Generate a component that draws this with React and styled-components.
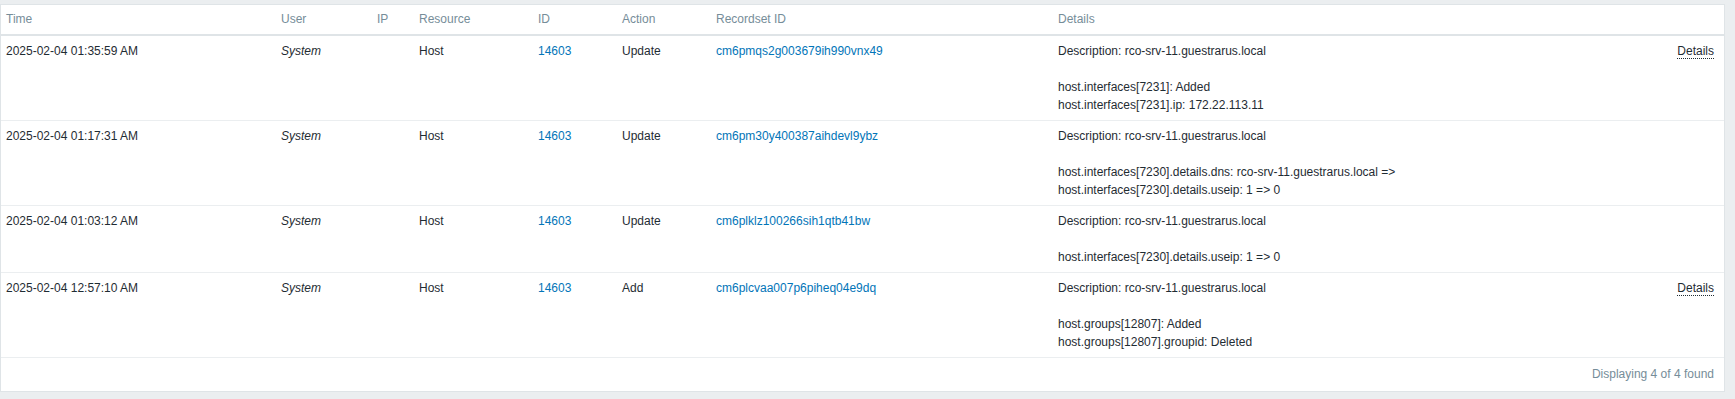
import React from "react";
import styled, { createGlobalStyle } from "styled-components";

const Global = createGlobalStyle`
  html, body { margin: 0; padding: 0; background: #ebeef0; }
  body { font-family: "Liberation Sans", Arial, sans-serif; font-size: 12px; color: #1f2c33; }
`;

const Page = styled.div`
  padding: 4px 10px 7px 0;
`;

const Panel = styled.div`
  background: #ffffff;
  border: 1px solid #dfe4e7;
`;

const Table = styled.table`
  width: 100%;
  border-collapse: collapse;
  table-layout: fixed;
`;

const Th = styled.th`
  text-align: left;
  font-weight: normal;
  color: #768d99;
  padding: 7px 5px 8px;
  line-height: 14px;
  border-bottom: 2px solid #dfe4e7;
  white-space: nowrap;
`;

const Row = styled.tr`
  border-bottom: 1px solid #ebeef0;
`;

const Td = styled.td`
  vertical-align: top;
  padding: 6px ${(p) => (p.$last ? "10px" : "5px")} 6px 5px;
  line-height: 18px;
  font-style: ${(p) => (p.$italic ? "italic" : "normal")};
  white-space: nowrap;
`;

const Link = styled.a`
  color: #0275b8;
  text-decoration: none;
  cursor: pointer;
`;

const DetailsBox = styled.div`
  display: flex;
  align-items: flex-start;
`;

const DetailsText = styled.div`
  flex: 1;
  white-space: pre-line;
`;

const DetailsLink = styled.a`
  color: #1f2c33;
  text-decoration: none;
  border-bottom: 1px dotted #1f2c33;
  line-height: 14px;
  margin-top: 2px;
  cursor: pointer;
`;

const Footer = styled.div`
  text-align: right;
  color: #768d99;
  line-height: 14px;
  padding: 9px 10px 10px;
`;

const cols = [275, 96, 42, 119, 84, 94, 342, null];

const rows = [
  {
    time: "2025-02-04 01:35:59 AM",
    action: "Update",
    rs: "cm6pmqs2g003679ih990vnx49",
    details:
      "Description: rco-srv-11.guestrarus.local\n\nhost.interfaces[7231]: Added\nhost.interfaces[7231].ip: 172.22.113.11",
    link: true,
  },
  {
    time: "2025-02-04 01:17:31 AM",
    action: "Update",
    rs: "cm6pm30y400387aihdevl9ybz",
    details:
      "Description: rco-srv-11.guestrarus.local\n\nhost.interfaces[7230].details.dns: rco-srv-11.guestrarus.local =>\nhost.interfaces[7230].details.useip: 1 => 0",
    link: false,
  },
  {
    time: "2025-02-04 01:03:12 AM",
    action: "Update",
    rs: "cm6plklz100266sih1qtb41bw",
    details:
      "Description: rco-srv-11.guestrarus.local\n\nhost.interfaces[7230].details.useip: 1 => 0",
    link: false,
  },
  {
    time: "2025-02-04 12:57:10 AM",
    action: "Add",
    rs: "cm6plcvaa007p6piheq04e9dq",
    details:
      "Description: rco-srv-11.guestrarus.local\n\nhost.groups[12807]: Added\nhost.groups[12807].groupid: Deleted",
    link: true,
  },
];

export default function App() {
  return (
    <>
      <Global />
      <Page>
        <Panel>
          <Table>
            <colgroup>
              {cols.map((w, i) => (
                <col key={i} style={w ? { width: w } : undefined} />
              ))}
            </colgroup>
            <thead>
              <tr>
                <Th>Time</Th>
                <Th>User</Th>
                <Th>IP</Th>
                <Th>Resource</Th>
                <Th>ID</Th>
                <Th>Action</Th>
                <Th>Recordset ID</Th>
                <Th>Details</Th>
              </tr>
            </thead>
            <tbody>
              {rows.map((r) => (
                <Row key={r.rs}>
                  <Td>{r.time}</Td>
                  <Td $italic>System</Td>
                  <Td></Td>
                  <Td>Host</Td>
                  <Td>
                    <Link>14603</Link>
                  </Td>
                  <Td>{r.action}</Td>
                  <Td>
                    <Link>{r.rs}</Link>
                  </Td>
                  <Td $last>
                    <DetailsBox>
                      <DetailsText>{r.details}</DetailsText>
                      {r.link && <DetailsLink>Details</DetailsLink>}
                    </DetailsBox>
                  </Td>
                </Row>
              ))}
            </tbody>
          </Table>
          <Footer>Displaying 4 of 4 found</Footer>
        </Panel>
      </Page>
    </>
  );
}
